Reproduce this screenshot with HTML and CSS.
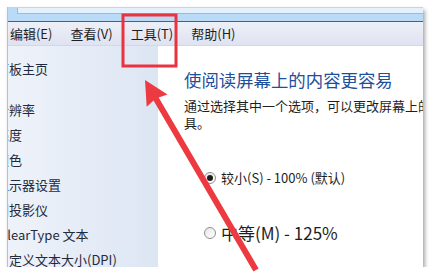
FILE: index.html
```html
<!DOCTYPE html>
<html lang="zh-CN">
<head>
    <meta charset="UTF-8">
    <meta name="viewport" content="width=device-width, initial-scale=1.0">
    <title>显示</title>
    <link rel="stylesheet" href="styles.css">
</head>
<body>
    <div class="window">
        <div class="toolbar">
            <div class="address"></div>
        </div>
        <div class="menubar">
            <span class="menu-item">文件(F)</span>
            <span class="menu-item">编辑(E)</span>
            <span class="menu-item">查看(V)</span>
            <span class="menu-item">工具(T)</span>
            <span class="menu-item">帮助(H)</span>
        </div>
        <div class="main">
            <div class="sidebar">
                <div class="side-link home">控制面板主页</div>
                <div class="side-group">
                    <div class="side-link">调整分辨率</div>
                    <div class="side-link">调整亮度</div>
                    <div class="side-link">校准颜色</div>
                    <div class="side-link">更改显示器设置</div>
                    <div class="side-link">连接到投影仪</div>
                    <div class="side-link">调整 ClearType 文本</div>
                    <div class="side-link">设置自定义文本大小(DPI)</div>
                </div>
            </div>
            <div class="content">
                <h1 class="title">使阅读屏幕上的内容更容易</h1>
                <p class="desc">通过选择其中一个选项，可以更改屏幕上的文本大小以及其他项。若要暂时放大部分屏幕，请使用放大镜工<br>具。</p>
                <label class="option small">
                    <span class="radio checked"></span>
                    <span>较小(S) - 100% (默认)</span>
                </label>
                <label class="option medium">
                    <span class="radio"></span>
                    <span>中等(M) - 125%</span>
                </label>
            </div>
        </div>
    </div>

    <!-- annotation: highlight box and arrow -->
    <svg class="annotation" width="433" height="277" viewBox="0 0 433 277">
        <rect x="123" y="15" width="53" height="51" fill="none" stroke="#ea3340" stroke-width="3"/>
        <polygon fill="#ec3a40" points="145,80 167.5,94.6 158.7,97.5 258.6,268.5 253.4,271.5 153.5,100.5 146.7,106.8"/>
    </svg>
</body>
</html>
```

FILE: styles.css
```css
body {
    margin: 0;
    background: #fff;
    font-family: "Noto Sans CJK SC", "Noto Sans", sans-serif;
    color: #1e1e1e;
}

.window {
    width: 416px;
    height: 260px;
    margin: 7px 0 0 7px;
    border-left: 1px solid #b8c2cc;
    box-sizing: border-box;
    overflow: hidden;
    display: flex;
    flex-direction: column;
    box-shadow: 2px 3px 4px rgba(0, 0, 0, 0.35);
    background: #fff;
}

.toolbar {
    height: 15px;
    background: #b9dbf7;
    border-top: 1px solid #c9d3dd;
    border-bottom: 1px solid #39658f;
    box-sizing: border-box;
    padding-left: 9px;
}

.address {
    height: 5px;
    background: #e4f0fb;
    border-left: 1px solid #a6b8ca;
    border-bottom: 1px solid #a6b8ca;
}

.menubar {
    height: 23px;
    display: flex;
    align-items: center;
    margin-left: -67px;
    background: linear-gradient(#eef0f8, #dfe2f0);
    border-bottom: 1px solid #d4d8e6;
    font-size: 13px;
    line-height: 16px;
}

.menu-item {
    padding: 0 9px;
    white-space: nowrap;
}

.main {
    flex: 1;
    display: flex;
    min-height: 0;
}

.sidebar {
    width: 150px;
    flex-shrink: 0;
    background: linear-gradient(90deg, #eef2fa, #dce6f3);
    padding-top: 10px;
    font-size: 13px;
    line-height: 25px;
    color: #1f2a3a;
}

.side-link {
    margin-left: -38px;
    white-space: nowrap;
}

.side-group {
    margin-top: 16px;
}

.content {
    flex: 1;
    padding: 24px 0 0 26px;
    overflow: hidden;
}

.title {
    margin: 0;
    font-size: 17.4px;
    line-height: 20px;
    font-weight: normal;
    color: #1d4f9c;
    white-space: nowrap;
}

.desc {
    margin: 7px 0 0;
    font-size: 13px;
    line-height: 17px;
    white-space: nowrap;
}

.option {
    display: flex;
    align-items: center;
    gap: 5px;
    margin-left: 20px;
    white-space: nowrap;
}

.option.small {
    margin-top: 38px;
    font-size: 13px;
    line-height: 18px;
}

.option.medium {
    margin-top: 35px;
    font-size: 17px;
    line-height: 22px;
}

.radio {
    width: 12px;
    height: 12px;
    border: 1px solid #8e8f8f;
    border-radius: 50%;
    box-sizing: border-box;
    background: linear-gradient(135deg, #e6e6e6, #fff);
    display: flex;
    align-items: center;
    justify-content: center;
}

.radio.checked::after {
    content: "";
    width: 6px;
    height: 6px;
    border-radius: 50%;
    background: #1c1c1c;
}

.annotation {
    position: absolute;
    top: 0;
    left: 0;
}
```
